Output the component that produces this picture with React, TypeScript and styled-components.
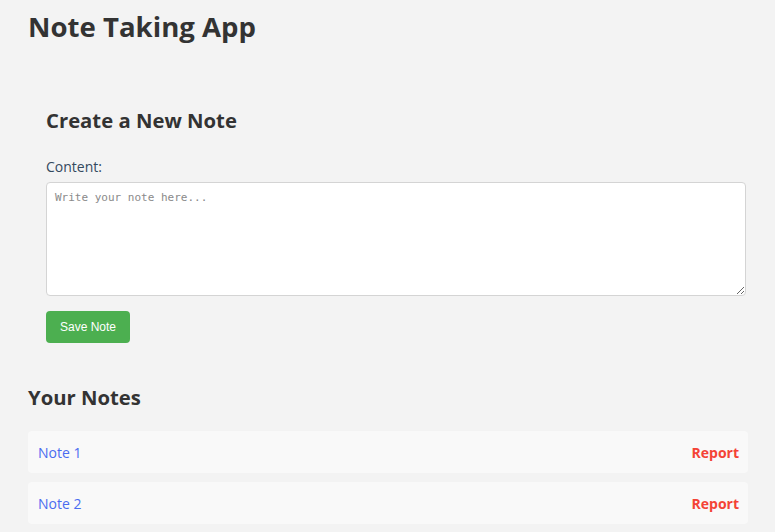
import React, { useState } from "react";
import styled, { createGlobalStyle } from "styled-components";

const GlobalStyle = createGlobalStyle`
  html, body {
    margin: 0;
    padding: 0;
    background: #f3f3f3;
  }
  body {
    font-family: "Open Sans", "Noto Sans", Arial, sans-serif;
    color: #333;
  }
`;

const Page = styled.div`
  padding: 3px 27px 0 28px;
`;

const Title = styled.h1`
  margin: 0;
  padding-top: 1px;
  font-size: 27.6px;
  line-height: 44px;
  font-weight: 700;
  color: #333;
`;

const FormCard = styled.section`
  margin-top: 56px;
  padding: 0 2px 0 18px;
`;

const SectionTitle = styled.h2`
  margin: 0;
  font-size: 20.3px;
  line-height: 32px;
  font-weight: 700;
  color: #333;
`;

const Label = styled.label`
  display: block;
  margin-top: 21px;
  font-size: 14px;
  line-height: 20px;
  color: #34495e;
`;

const TextArea = styled.textarea`
  display: block;
  box-sizing: border-box;
  width: 100%;
  height: 114px;
  margin-top: 5px;
  padding: 8px;
  border: 1px solid #d4d4d4;
  border-radius: 4px;
  background: #fff;
  font-family: "DejaVu Sans Mono", "Liberation Mono", monospace;
  font-size: 11px;
  color: #333;
  resize: vertical;

  &::placeholder {
    color: #8a8a8a;
  }
`;

const SaveButton = styled.button`
  display: block;
  margin-top: 15px;
  height: 32px;
  padding: 0 14px;
  border: none;
  border-radius: 4px;
  background: #4caf50;
  color: #fff;
  font-family: "Liberation Sans", Arial, sans-serif;
  font-size: 12px;
  cursor: pointer;
`;

const NotesSection = styled.section`
  margin-top: 38px;
`;

const NotesList = styled.ul`
  list-style: none;
  margin: 18px 0 0;
  padding: 0;
  display: flex;
  flex-direction: column;
  gap: 9px;
`;

const NoteItem = styled.li`
  display: flex;
  align-items: center;
  justify-content: space-between;
  height: 42px;
  padding: 0 9px 0 10px;
  background: #f9f9f9;
  border-radius: 4px;
`;

const NoteLink = styled.a`
  font-size: 14px;
  color: #4a6cf0;
  text-decoration: none;
`;

const ReportLink = styled.a`
  font-size: 14px;
  font-weight: 700;
  color: #f44336;
  text-decoration: none;
`;

export default function App() {
  const [content, setContent] = useState("");
  const notes = ["Note 1", "Note 2"];

  return (
    <>
      <GlobalStyle />
      <Page>
        <Title>Note Taking App</Title>
        <FormCard>
          <SectionTitle>Create a New Note</SectionTitle>
          <Label htmlFor="content">Content:</Label>
          <TextArea
            id="content"
            placeholder="Write your note here..."
            value={content}
            onChange={(e) => setContent(e.target.value)}
          />
          <SaveButton type="button">Save Note</SaveButton>
        </FormCard>
        <NotesSection>
          <SectionTitle>Your Notes</SectionTitle>
          <NotesList>
            {notes.map((n) => (
              <NoteItem key={n}>
                <NoteLink href="#">{n}</NoteLink>
                <ReportLink href="#">Report</ReportLink>
              </NoteItem>
            ))}
          </NotesList>
        </NotesSection>
      </Page>
    </>
  );
}
